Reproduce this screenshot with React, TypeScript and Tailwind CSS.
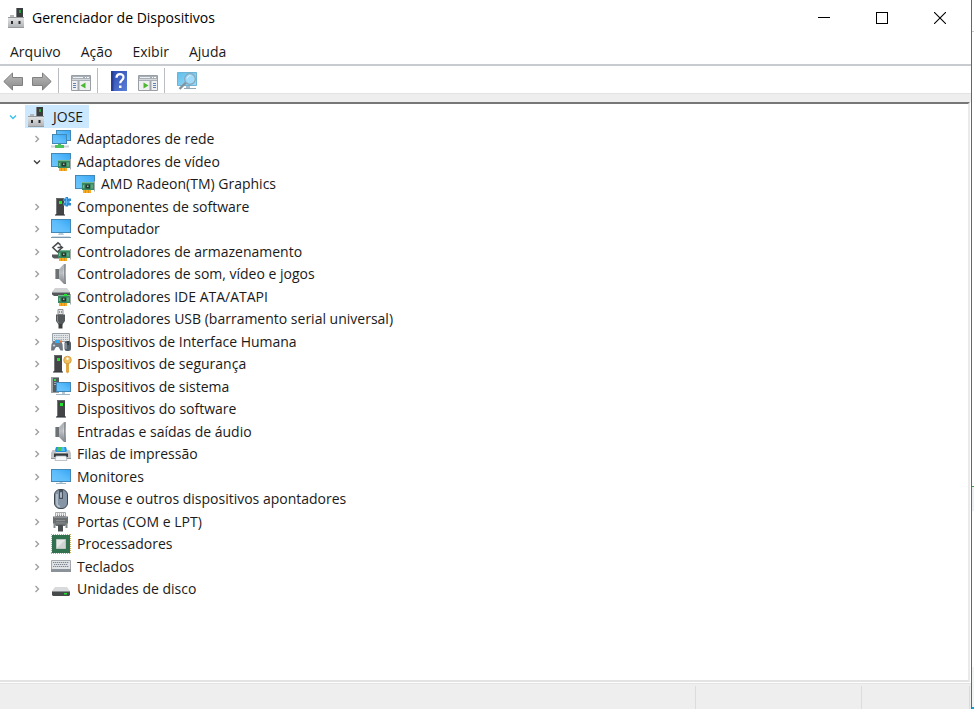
import React, { useState } from 'react';

type IconProps = { children: React.ReactNode; className?: string };

function Icon({ children, className = 'size-5' }: IconProps) {
  return (
    <svg viewBox="0 0 20 20" className={`${className} shrink-0 overflow-visible`} aria-hidden="true">
      {children}
    </svg>
  );
}

// Gradients shared by all of the icons
function Gradients() {
  return (
    <svg className="absolute size-0" aria-hidden="true">
      <defs>
        <linearGradient id="screen" x1="0" y1="1" x2="1" y2="0">
          <stop offset="0" stopColor="#6fc6fb" />
          <stop offset="0.5" stopColor="#5cbcfb" />
          <stop offset="1" stopColor="#35a5f5" />
        </linearGradient>
        <linearGradient id="glass" x1="0" y1="0" x2="1" y2="1">
          <stop offset="0" stopColor="#5fc0ec" />
          <stop offset="1" stopColor="#9ad9f7" />
        </linearGradient>
        <linearGradient id="cone" x1="0" y1="0" x2="0" y2="1">
          <stop offset="0" stopColor="#a2a7ab" />
          <stop offset="0.45" stopColor="#d3d6d8" />
          <stop offset="1" stopColor="#787d82" />
        </linearGradient>
        <linearGradient id="light" x1="0" y1="0" x2="0" y2="1">
          <stop offset="0" stopColor="#e2e3e4" />
          <stop offset="1" stopColor="#b2b5b8" />
        </linearGradient>
        <linearGradient id="arrow" x1="0" y1="0" x2="0" y2="1">
          <stop offset="0" stopColor="#bababa" />
          <stop offset="1" stopColor="#8a8a8a" />
        </linearGradient>
        <linearGradient id="help" x1="0" y1="0" x2="1" y2="1">
          <stop offset="0" stopColor="#2c49ae" />
          <stop offset="1" stopColor="#5a80d8" />
        </linearGradient>
      </defs>
    </svg>
  );
}

function Screen({ x, y, w, h }: { x: number; y: number; w: number; h: number }) {
  return (
    <rect x={x + 0.5} y={y + 0.5} width={w - 1} height={h - 1} fill="url(#screen)" stroke="#4289b8" />
  );
}

function Tower({ x, w = 8 }: { x: number; w?: number }) {
  return (
    <>
      <path d={`M${x} 1h${w}v16h-${w}z`} fill="#424445" />
      <path d={`M${x} 1h1v16h-1z`} fill="#77797b" />
      <path d={`M${x} 1h${w}v1h-${w}z`} fill="#636667" />
      <path d={`M${x - 1} 17h${w + 2}v2h-${w + 2}z`} fill="#8e9193" />
      <path d={`M${x} 17h${w}v1h-${w}z`} fill="#3a3c3d" />
      <rect x={x + w / 2 - 1} y="4" width="3" height="3" fill="#21e52f" />
    </>
  );
}

// Small green expansion card with gold contacts
function Board() {
  return (
    <>
      <path d="M8 15h8v4h-8z" fill="#f7ab22" />
      <path d="M10.5 16v3M13.5 16v3" stroke="#d48912" strokeWidth="0.7" />
      <path d="M7 8h12v8h-12z" fill="#398a62" />
      <path d="M7 8h12v1h-12z" fill="#76b993" />
      <path d="M10.5 10.5h4.5v4h-4.5z" fill="#24392f" />
      <path d="M12 11.5h1.5v1.5h-1.5z" fill="#a3b8ac" />
      <path d="M17 10.500v4M8.700 11v3" stroke="#93d3aa" strokeWidth="0.8" />
      <path d="M19.500 7v10.500" stroke="#a6acb0" />
    </>
  );
}

function Speaker() {
  return (
    <Icon>
      <path d="M4 5h4v10h-4z" fill="#6c7176" />
      <path d="M4 5h1v10h-1z" fill="#a4a9ad" />
      <path d="M8 5 13 0h2v20h-2l-5-5z" fill="url(#cone)" />
      <path d="M13 .500h1.500v19h-1.500z" fill="#8b9095" />
      <path d="M11 4v12M9 5v10" stroke="#92979b" strokeWidth="0.7" />
    </Icon>
  );
}

function RootIcon() {
  return (
    <Icon>
      <path d="M9 0h7v10h-7z" fill="#3b3e3f" />
      <path d="M9 0h1v10h-1z" fill="#7f8385" />
      <rect x="12" y="2" width="2" height="3" fill="#2ba03c" />
      <path d="M3 7h4v3h-4z" fill="#b5b8ba" />
      <path d="M1 10h16v9h-16z" fill="url(#light)" />
      <path d="M1 9.500h16M1 19.500h16" stroke="#969a9d" />
      <path d="M4 13h2v3h-2zM11.500 13h2v3h-2z" fill="#2b2b2b" />
    </Icon>
  );
}

const icons: Record<string, React.ReactNode> = {
  root: <RootIcon />,
  network: (
    <Icon>
      <Screen x={5} y={1} w={15} h={11} />
      <Screen x={1} y={5} w={15} h={10} />
      <path d="M0 16.500h18v2h-18z" fill="#ccd3d6" />
      <path d="M7 15h3v1h3v3h-9v-3h3z" fill="#4cc35a" />
    </Icon>
  ),
  display: (
    <Icon>
      <Screen x={0} y={1} w={20} h={14} />
      <Board />
    </Icon>
  ),
  component: (
    <Icon>
      <Tower x={5} />
      <path d="M12 1.500h2.500V0H17v1.500h3V4h-1.500v2H20v2.500h-3v1h-2.500v-1H12V6h1.500V4H12z" fill="#2c89cd" />
      <path d="M15.500 1v7M13.500 5h5" stroke="#5cb2f0" />
    </Icon>
  ),
  computer: (
    <Icon>
      <Screen x={0} y={0} w={20} h={14} />
      <path d="M8 14h4l1 2H7z" fill="#b9cbd8" />
      <path d="M0 18.500h20" stroke="#7c97ac" />
      <path d="M1 17.500h18" stroke="#cfdde6" />
    </Icon>
  ),
  storage: (
    <Icon>
      <path d="M1 12.500h8v4H3l-2-1.500z" fill="#54585a" />
      <Board />
      <path d="M9.500 2.800 7 .800 1.800 5.500 6.500 10l3-3" fill="none" stroke="#4a4e50" strokeWidth="1.600" />
      <path d="M11 5.500H6.500M9 3.500l2.500 2L9 7.500" fill="none" stroke="#4a4e50" strokeWidth="1.400" />
    </Icon>
  ),
  speaker: <Speaker />,
  ide: (
    <Icon>
      <path d="M4 1h12l3 4H1z" fill="#d0d2d3" />
      <path d="M1 5h18v4H3L1 7.500z" fill="#55585a" />
      <path d="M1 5.500h18" stroke="#96999b" />
      <Board />
      <rect x="13" y="7" width="3" height="2" fill="#21e52f" />
    </Icon>
  ),
  usb: (
    <Icon>
      <path d="M7 .500h5v5H7z" fill="#e2e3e4" stroke="#909395" />
      <path d="M8 3h1M10 3h1" stroke="#444" />
      <path d="M5 5.500h9V12l-2.500 3.500h-4L5 12z" fill="#55585a" />
      <path d="M6.500 6.500V12L8 14" fill="none" stroke="#85898b" />
      <path d="M7.500 15h4v4.500h-4z" fill="#3a3c3d" />
    </Icon>
  ),
  hid: (
    <Icon>
      <path d="M1.500 1.500h17v8h-17z" fill="#e2e6e9" stroke="#98a2ab" />
      <path d="M3 3.500h14M3 5.500h14M3 7.500h14" stroke="#9ba5ae" strokeDasharray="1.200 1" />
      <path d="M2.500 9H10l1.500 3 .500 6.500H9.500l-2-3.500H5l-2 3.500H0L.500 12z" fill="#6e7984" />
      <path d="M4 8h5v3H4z" fill="#35b0f5" />
      <circle cx="10" cy="9.500" r="1.200" fill="#ee7a3b" />
      <path d="M1.800 13.500h2.400M3 12.300v2.400" stroke="#c9d3dc" />
      <rect x="13.500" y="9" width="6.500" height="10" rx="2.500" fill="#525d68" />
      <path d="M15 11v6" stroke="#a6b5c3" />
      <path d="M17 9v4" stroke="#1b2025" />
    </Icon>
  ),
  security: (
    <Icon>
      <Tower x={3} />
      <path d="M15 9h3v9l-1.500 1.500L15 18z" fill="#dfa743" />
      <circle cx="16.500" cy="6" r="3.800" fill="#f0bf62" stroke="#cb9434" strokeWidth="0.800" />
      <circle cx="16.500" cy="4.700" r="1.200" fill="#fff" />
    </Icon>
  ),
  system: (
    <Icon>
      <path d="M0 0h8v16H0z" fill="#9a9fa2" />
      <path d="M2 1h6v14H2z" fill="#545a5e" />
      <path d="M3 5.500h4M3 7.500h4" stroke="#a2a9ad" />
      <rect x="3" y="2" width="2" height="2" fill="#2fe04a" />
      <Screen x={5} y={5} w={15} h={10} />
      <path d="M5 17.500h14" stroke="#9fb6c6" />
      <path d="M11 15h3v2h-3z" fill="#b0c8d7" />
    </Icon>
  ),
  software: (
    <Icon>
      <Tower x={6} />
    </Icon>
  ),
  printer: (
    <Icon>
      <path d="M5 3h10l1.500 5h-13z" fill="#2690dc" />
      <path d="M7 3h4l-1 4H6z" fill="#48c25e" />
      <path d="M11 3h2l1 4h-4z" fill="#48c3f5" />
      <path d="M1.500 6H4l1 2.500h10L16 6h2.500L20 9v6H0V9z" fill="#bfc3c6" />
      <path d="M0 14.500h20" stroke="#8f959a" />
      <path d="M3 9.500h14V13H3z" fill="#35393c" />
      <path d="M5 12h10l1 4.500H4z" fill="#f6f8f9" stroke="#a5acb0" strokeWidth="0.700" />
    </Icon>
  ),
  monitor: (
    <Icon>
      <Screen x={0} y={2} w={20} h={13} />
      <path d="M8.500 15h3v1.500h-3z" fill="#b7cddb" />
      <path d="M5 16.500h10" stroke="#9fb6c5" />
    </Icon>
  ),
  mouse: (
    <Icon>
      <rect x="3.500" y=".500" width="13" height="19" rx="5.500" fill="#8695a5" stroke="#3c4650" />
      <path d="M6 5v9c0 2 1 3.500 3 3.500" fill="none" stroke="#bcc7d3" strokeWidth="1.500" />
      <path d="M10 1v9" stroke="#46515c" strokeWidth="4" />
      <rect x="9" y="3" width="2" height="6" rx="1" fill="#a9b5c2" />
    </Icon>
  ),
  ports: (
    <Icon>
      <path d="M4.500.500h10v4h-10z" fill="#f0f0f0" stroke="#a9abac" />
      <path d="M6 2h8M6 3.500h8" stroke="#85898b" strokeDasharray="1 1" />
      <path d="M2 4.500h15V11l-3 3H5l-3-3z" fill="#6b6e70" />
      <path d="M3 5.500h13M5 8.500h9M5 11h9" stroke="#999c9e" strokeWidth="0.700" />
      <path d="M3.500 11v5M15.500 11v5" stroke="#85888a" strokeWidth="2" />
      <path d="M7 13h5v6.500H7z" fill="#4b4e50" />
    </Icon>
  ),
  cpu: (
    <Icon>
      <path d="M.500 0v20M19.500 0v20M0 .500h20M0 19.500h20" stroke="#cdaa58" strokeDasharray="1 1" />
      <path d="M1 1h18v18H1z" fill="#32714f" />
      <path d="M5.500 5.500h9v9h-9z" fill="#e6e8e7" stroke="#b8c6be" />
      <path d="M14 6v8H6z" fill="#d0d3d1" />
    </Icon>
  ),
  keyboard: (
    <Icon>
      <path d="M.500 3.500h19v11H.500z" fill="#e0e3e6" stroke="#a3a9af" />
      <path d="M2 5.500h16M3 7.500h14M2 9.500h16" stroke="#7d8690" strokeDasharray="1.300 .700" />
      <path d="M0 12h20v3H0z" fill="#8b9299" />
    </Icon>
  ),
  disk: (
    <Icon>
      <path d="M4 8h12l3 4H1z" fill="#d8dadb" />
      <path d="M1 12h18v4l-1 1H2l-1-1z" fill="#474a4b" />
      <path d="M1 12.500h18" stroke="#8b8f91" />
      <rect x="13" y="14" width="3" height="1.500" fill="#21e52f" />
    </Icon>
  ),
};

type Device = { name: string; icon: string; level: number; state?: 'open' | 'closed' };

const devices: Device[] = [
  { name: 'JOSE', icon: 'root', level: 0, state: 'open' },
  { name: 'Adaptadores de rede', icon: 'network', level: 1, state: 'closed' },
  { name: 'Adaptadores de vídeo', icon: 'display', level: 1, state: 'open' },
  { name: 'AMD Radeon(TM) Graphics', icon: 'display', level: 2 },
  { name: 'Componentes de software', icon: 'component', level: 1, state: 'closed' },
  { name: 'Computador', icon: 'computer', level: 1, state: 'closed' },
  { name: 'Controladores de armazenamento', icon: 'storage', level: 1, state: 'closed' },
  { name: 'Controladores de som, vídeo e jogos', icon: 'speaker', level: 1, state: 'closed' },
  { name: 'Controladores IDE ATA/ATAPI', icon: 'ide', level: 1, state: 'closed' },
  { name: 'Controladores USB (barramento serial universal)', icon: 'usb', level: 1, state: 'closed' },
  { name: 'Dispositivos de Interface Humana', icon: 'hid', level: 1, state: 'closed' },
  { name: 'Dispositivos de segurança', icon: 'security', level: 1, state: 'closed' },
  { name: 'Dispositivos de sistema', icon: 'system', level: 1, state: 'closed' },
  { name: 'Dispositivos do software', icon: 'software', level: 1, state: 'closed' },
  { name: 'Entradas e saídas de áudio', icon: 'speaker', level: 1, state: 'closed' },
  { name: 'Filas de impressão', icon: 'printer', level: 1, state: 'closed' },
  { name: 'Monitores', icon: 'monitor', level: 1, state: 'closed' },
  { name: 'Mouse e outros dispositivos apontadores', icon: 'mouse', level: 1, state: 'closed' },
  { name: 'Portas (COM e LPT)', icon: 'ports', level: 1, state: 'closed' },
  { name: 'Processadores', icon: 'cpu', level: 1, state: 'closed' },
  { name: 'Teclados', icon: 'keyboard', level: 1, state: 'closed' },
  { name: 'Unidades de disco', icon: 'disk', level: 1, state: 'closed' },
];

const indents = ['pl-[5px]', 'pl-[29px]', 'pl-[53px]'];

function Chevron({ open, root }: { open: boolean; root: boolean }) {
  return (
    <svg viewBox="0 0 16 16" className="size-4" fill="none" strokeWidth="1.4" aria-hidden="true">
      {open ? (
        <path d="M5 6.500 8 9.500l3-3" stroke={root ? '#39c3ee' : '#404040'} />
      ) : (
        <path d="M6.500 5 9.500 8l-3 3" stroke="#a0a0a0" />
      )}
    </svg>
  );
}

function DeviceTree() {
  const [selected, setSelected] = useState('JOSE');

  return (
    <ul role="tree" aria-label="Dispositivos" className="pt-px">
      {devices.map((device) => (
        <li
          key={device.name}
          role="treeitem"
          aria-level={device.level + 1}
          aria-selected={selected === device.name}
          aria-expanded={device.state ? device.state === 'open' : undefined}
          className={`flex items-center odd:h-[23px] even:h-[22px] ${indents[device.level]}`}
        >
          <span className="mr-1 w-4 shrink-0">
            {device.state && <Chevron open={device.state === 'open'} root={device.level === 0} />}
          </span>
          <button
            type="button"
            onClick={() => setSelected(device.name)}
            className={`flex h-full items-center gap-1.5 whitespace-nowrap pl-0.5 pr-1.5 ${
              selected === device.name ? 'bg-[#cce8ff]' : ''
            }`}
          >
            {icons[device.icon]}
            {device.name}
          </button>
        </li>
      ))}
    </ul>
  );
}

function TitleBar() {
  const button = 'flex h-9 w-[58px] items-center justify-center hover:bg-gray-200';
  return (
    <header className="flex h-9 items-center pl-[7px] pr-0.5">
      <RootIcon />
      <h1 className="ml-[5px] text-black">Gerenciador de Dispositivos</h1>
      <div className="ml-auto flex">
        <button type="button" aria-label="Minimizar" className={button}>
          <svg viewBox="0 0 12 12" className="size-3" shapeRendering="crispEdges">
            <path d="M0 5h12v1H0z" />
          </svg>
        </button>
        <button type="button" aria-label="Maximizar" className={button}>
          <svg viewBox="0 0 12 12" className="size-3" shapeRendering="crispEdges">
            <path d="M.5.5h11v11H.5z" fill="none" stroke="#000" />
          </svg>
        </button>
        <button type="button" aria-label="Fechar" className={button}>
          <svg viewBox="0 0 12 12" className="size-3">
            <path d="M0 0l12 12M12 0 0 12" stroke="#000" strokeWidth="1.1" />
          </svg>
        </button>
      </div>
    </header>
  );
}

function PanelIcon({ flip }: { flip?: boolean }) {
  return (
    <Icon>
      <path d="M.5 4.500h19v15H.5z" fill="#f0f0f0" stroke="#9a9fa5" />
      <path d="M1 5h18v5H1z" fill="#a9afb6" />
      <path d="M2 6.500h10" stroke="#eef1f3" />
      <path d="M14 6.500h1M16 6.500h2" stroke="#fff" />
      <path d="M1 8.500h18" stroke="#d5d8db" />
      {flip ? (
        <>
          <path d="M12.500 10v9" stroke="#a3a9af" strokeWidth="2" />
          <path d="M15 12.500h3M15 14.500h3M15 16.500h3" stroke="#5f84b5" />
          <path d="M5.500 11.500v6l5-3z" fill="#4bb82f" />
        </>
      ) : (
        <>
          <path d="M7.500 10v9" stroke="#a3a9af" strokeWidth="2" />
          <path d="M2 12.500h3M2 14.500h3M2 16.500h3" stroke="#5f84b5" />
          <path d="M14.500 11.500v6l-5-3z" fill="#4bb82f" />
        </>
      )}
    </Icon>
  );
}

function Divider() {
  return <span className="h-[25px] w-px bg-[#b9bcc0]" />;
}

function Toolbar() {
  return (
    <div
      role="toolbar"
      aria-label="Ferramentas"
      className="flex h-7 items-center border-b border-[#e3e3e3] pl-[3px] pt-0.5"
    >
      <button type="button" aria-label="Voltar" className="mr-[9px]">
        <Icon>
          <path d="M.8 10.500 9.500 2v4.500h10v8h-10V19z" fill="url(#arrow)" stroke="#808080" strokeLinejoin="round" />
        </Icon>
      </button>
      <button type="button" aria-label="Avançar" className="mr-1.5">
        <Icon>
          <path d="M19.200 10.500 10.500 2v4.500H.5v8h10V19z" fill="url(#arrow)" stroke="#808080" strokeLinejoin="round" />
        </Icon>
      </button>
      <Divider />
      <button type="button" aria-label="Mostrar árvore de console" className="ml-3 mr-1.5">
        <PanelIcon />
      </button>
      <Divider />
      <button type="button" aria-label="Ajuda" className="ml-[11px] mr-[9px]">
        <Icon>
          <path d="M2 0h16v20H2z" fill="url(#help)" />
          <path d="M2 0h2.500v20H2z" fill="#273f96" />
          <path d="M7.500 6.800c0-4.800 7-4.600 7-.6 0 3-3.300 3-3.300 6" fill="none" stroke="#fff" strokeWidth="2.200" />
          <path d="M10 14.500h2.500V17H10z" fill="#fff" />
        </Icon>
      </button>
      <button type="button" aria-label="Mostrar painel de ações" className="mr-1.5">
        <PanelIcon flip />
      </button>
      <Divider />
      <button type="button" aria-label="Verificar alterações de hardware" className="ml-3">
        <Icon>
          <path d="M.5 1.500h19v13H.5z" fill="url(#glass)" stroke="#6cb3d6" />
          <path d="M9 15h4v2H9z" fill="#a6bccb" />
          <path d="M7 17.500h12" stroke="#93a8b6" />
          <path d="M9.500 11 2.500 18" stroke="#84949f" strokeWidth="2.400" />
          <circle cx="13" cy="8" r="5.300" fill="#9fdafa" stroke="#8aa5b6" strokeWidth="1.200" />
          <path d="M10.200 7.500C10.500 5.500 12 4.700 13.500 4.700" fill="none" stroke="#e4f6ff" />
        </Icon>
      </button>
    </div>
  );
}

export default function App() {
  return (
    <div className="flex min-h-screen bg-white font-['Open_Sans','Noto_Sans',sans-serif] text-sm leading-5 text-[#1a1a1a]">
      <Gradients />
      <main className="flex min-w-0 flex-1 flex-col border-r border-[#666]">
        <TitleBar />
        <nav className="flex h-7 items-center gap-5 pl-2.5 pt-1">
          {['Arquivo', 'Ação', 'Exibir', 'Ajuda'].map((label) => (
            <button type="button" key={label}>
              {label}
            </button>
          ))}
        </nav>
        <div className="h-0.5 bg-[#c8cbd0]" />
        <Toolbar />
        <div className="h-2 bg-[#eee]" />
        <section className="mr-px flex-1 border-b-2 border-r-2 border-t-2 border-b-[#e3e3e3] border-r-[#eaeaea] border-t-[#777]">
          <DeviceTree />
        </section>
        <footer className="mt-px flex h-[26px] border-t border-[#e3e3e3] bg-[#eee] pt-0.5">
          <div className="flex-1 border-r border-[#dcdcdc]" />
          <div className="w-[166px] border-r border-[#dcdcdc]" />
          <div className="mr-px w-[108px] border-r border-[#dcdcdc]" />
        </footer>
      </main>
      {/* sliver of the window behind */}
      <aside className="flex w-0.5 flex-col">
        <div className="h-8 border-b border-[#ccc]" />
        <div className="grow-[453]" />
        <div className="h-[25px] border-t border-[#3f9b3f] bg-[#edf1f3]" />
        <div className="grow-[155]" />
        <div className="h-[42px] border-b-2 border-[#14a0d0] bg-[#f1f4f5]" />
      </aside>
    </div>
  );
}
